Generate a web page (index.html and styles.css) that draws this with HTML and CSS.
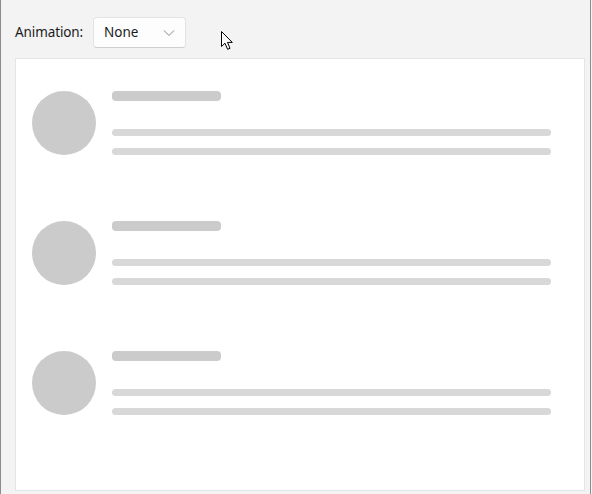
FILE: index.html
```html
<!DOCTYPE html>
<html>
<head>
<meta charset="utf-8">
<link rel="stylesheet" href="styles.css">
</head>
<body>
<div class="window">
  <div class="toolbar">
    <span class="label">Animation:</span>
    <div class="combo">
      <span class="combo-text">None</span>
      <svg class="chev" width="12" height="8" viewBox="0 0 12 8"><path d="M1 1.5 L6 6.5 L11 1.5" fill="none" stroke="#8a8a8a" stroke-width="1"/></svg>
    </div>
  </div>
  <div class="panel">
    <div class="row">
      <div class="avatar"></div>
      <div class="lines">
        <div class="title"></div>
        <div class="line l1"></div>
        <div class="line"></div>
      </div>
    </div>
    <div class="row">
      <div class="avatar"></div>
      <div class="lines">
        <div class="title"></div>
        <div class="line l1"></div>
        <div class="line"></div>
      </div>
    </div>
    <div class="row">
      <div class="avatar"></div>
      <div class="lines">
        <div class="title"></div>
        <div class="line l1"></div>
        <div class="line"></div>
      </div>
    </div>
  </div>
  <svg class="cursor" width="14" height="20" viewBox="0 0 14 20"><path d="M0.5 0.5 L0.5 15.5 L4 12.2 L6.6 18.3 L9 17.3 L6.5 11.4 L11.3 11.4 Z" fill="#ffffff" stroke="#000000" stroke-width="1" stroke-linejoin="miter"/></svg>
</div>
</body>
</html>
```
FILE: styles.css
```css
html, body {
  margin: 0;
  padding: 0;
}
body {
  width: 592px;
  height: 494px;
  background: #f3f3f3;
  font-family: "Noto Sans", "Open Sans", sans-serif;
  overflow: hidden;
}
.window {
  position: relative;
  width: 589px;
  height: 494px;
  border-left: 1px solid #8c8c8c;
  border-right: 1px solid #8c8c8c;
  box-sizing: content-box;
}
.toolbar {
  display: flex;
  align-items: center;
  padding: 17px 0 0 14px;
  height: 30px;
}
.label {
  font-size: 13.5px;
  color: #1b1b1b;
  width: 78px;
  letter-spacing: -0.1px;
}
.combo {
  box-sizing: border-box;
  width: 93px;
  height: 31px;
  border: 1px solid #e3e3e3;
  border-bottom-color: #cfcfcf;
  border-radius: 4px;
  background: #fdfdfd;
  display: flex;
  align-items: center;
  padding-left: 10px;
}
.combo-text {
  font-size: 13.5px;
  color: #1b1b1b;
  flex: 1;
}
.chev {
  margin-right: 10px;
  margin-top: 1px;
}
.panel {
  box-sizing: border-box;
  margin: 11px 0 0 14px;
  width: 570px;
  height: 433px;
  border: 1px solid #e5e5e5;
  background: #ffffff;
  padding: 32px 33px 0 16px;
  display: flex;
  flex-direction: column;
  gap: 66px;
}
.row {
  display: flex;
  gap: 16px;
  height: 64px;
}
.avatar {
  width: 64px;
  height: 64px;
  border-radius: 50%;
  background: #cbcbcb;
  flex: none;
}
.lines {
  flex: 1;
  display: flex;
  flex-direction: column;
}
.title {
  width: 109px;
  height: 12px;
  border-radius: 4px;
  background: #cbcbcb;
}
.line {
  height: 8px;
  border-radius: 4px;
  background: #d8d8d8;
  margin-top: 12px;
}
.line.l1 {
  margin-top: 28px;
}
.cursor {
  position: absolute;
  left: 220px;
  top: 31px;
}
```
